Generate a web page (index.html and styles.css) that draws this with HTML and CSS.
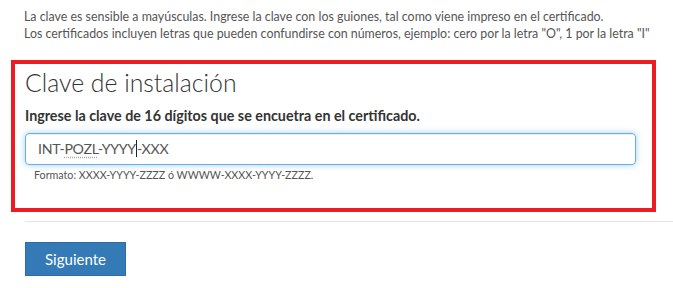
FILE: index.html
```html
<!DOCTYPE html>
<html lang="es">
<head>
<meta charset="utf-8">
<link rel="stylesheet" href="styles.css">
</head>
<body>
<div class="intro">
  <p>La clave es sensible a mayúsculas. Ingrese la clave con los guiones, tal como viene impreso en el certificado.</p>
  <p>Los certificados incluyen letras que pueden confundirse con números, ejemplo: cero por la letra "O", 1 por la letra "I"</p>
</div>
<div class="panel">
  <h1 class="title">Clave de instalación</h1>
  <label class="label">Ingrese la clave de 16 dígitos que se encuetra en el certificado.</label>
  <div class="input">INT-<span class="spell">POZL</span>-YYYY<span class="caret"></span>-XXX</div>
  <p class="hint">Formato: XXXX-YYYY-ZZZZ ó WWWW-XXXX-YYYY-ZZZZ.</p>
</div>
<div class="footer">
  <button class="btn">Siguiente</button>
</div>
</body>
</html>
```
FILE: styles.css
```css
html, body { margin: 0; padding: 0; background: #fff; }
body { font-family: Lato, "Open Sans", sans-serif; color: #333; width: 673px; overflow: hidden; }
.intro { padding: 8px 0 0 24px; font-size: 12.4px; line-height: 17px; color: #555; }
.intro p { margin: 0; }
.panel { margin: 18px 17px 0 11px; border: 4px solid #ed1c24; padding: 3px 16px 0 10px; box-sizing: border-box; height: 152px; }
.title { margin: 0; font-weight: 300; font-size: 24.8px; line-height: 32px; color: #333; }
.label { display: block; margin-top: 7px; font-weight: 700; font-size: 14.3px; line-height: 20px; color: #333; }
.input { margin-top: 7px; height: 32px; box-sizing: border-box; border: 1px solid #66afe9; border-radius: 4px; box-shadow: inset 0 1px 1px rgba(0,0,0,.075), 0 0 6px rgba(102,175,233,.6); padding: 0 12px; font-size: 14.2px; line-height: 30px; color: #555; letter-spacing: -0.3px; }
.spell { text-decoration: underline dotted #aaa; text-underline-offset: 3px; }
.caret { display: inline-block; width: 1px; height: 17px; background: #222; vertical-align: -3px; }
.hint { margin: 3px 0 0 9px; font-size: 10.7px; line-height: 14px; color: #555; }
.footer { margin: 9px 0 0 25px; border-top: 1px solid #e5e5e5; padding-top: 20px; }
.btn { display: block; width: 101px; height: 34px; background: #337ab7; border: 1px solid #2e6da4; border-radius: 0; color: #fff; font-family: Lato, sans-serif; font-size: 15px; padding: 0; }
```
